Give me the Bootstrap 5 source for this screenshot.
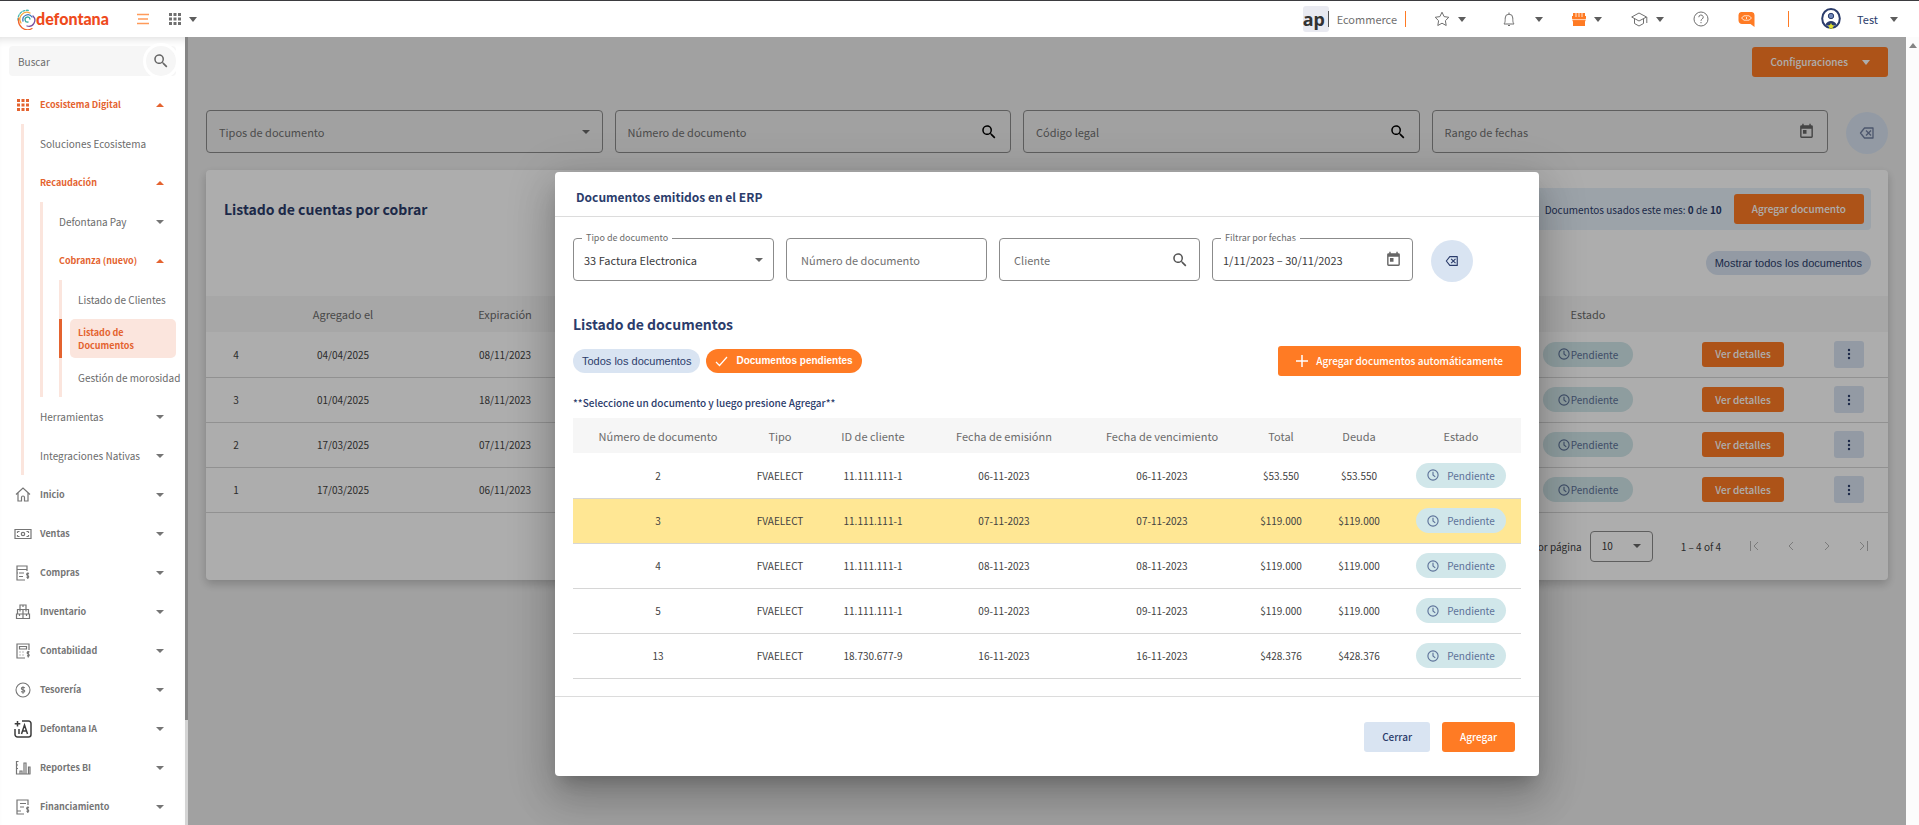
<!DOCTYPE html>
<html lang="es">
<head>
<meta charset="utf-8">
<meta name="viewport" content="width=device-width, initial-scale=1">
<title>Defontana - Listado de documentos</title>
<link href="https://cdn.jsdelivr.net/npm/bootstrap@5.3.0/dist/css/bootstrap.min.css" rel="stylesheet">
<style>
  :root { --brand: #ff7b24; --brand-deep: #e4632f; --navy: #2b3c6b; --mist: #d9e4f2; --teal: #d1e7ea; --ink: #424242; --soft: #6b6b6b; --tint: #fbe5dd; }
  body { font-family: "Noto Sans CJK SC", "Source Sans Pro", sans-serif; font-size: 10px; line-height: 13px; color: var(--ink); }
  svg { display: block; flex: none; }
  .ui-font { font-family: "Liberation Sans", sans-serif; font-size: 11px; line-height: 14px; }
  .caret { width: 0; height: 0; border: 4px solid transparent; border-top: 5px solid #5d5d5d; border-bottom: 0; flex: none; }
  .caret.up { border-top: 0; border-bottom: 4px solid var(--brand-deep); }

  /* top bar */
  .topbar { height: 37px; border-top: 1px solid #3b3b3f; background: #fff; padding: 0 21px 0 17px; z-index: 5; color: #6f6f6f; }
  .brand-word { font: 900 16px/20px Lato, sans-serif; color: #ee4a1c; }
  .rule { width: 1px; height: 16px; background: var(--brand); }
  .tools { gap: 29px; }
  .icon-btn { border: 0; background: none; padding: 0; display: flex; align-items: center; gap: 8px; color: #6f6f6f; }
  .icon-btn.wide { gap: 20px; }
  .icon-btn.user, .shop-name { font-size: 11px; }
  .icon-btn.user { color: var(--navy); margin-left: 32px; }
  .shop { width: 26px; height: 26px; background: #e9eaf1; border-radius: 3px; font: 700 18px/24px "Noto Sans", sans-serif; color: #333; }
  .shop-bar { width: 1px; height: 16px; background: #555; }

  /* side menu */
  .side { width: 185px; background: #fff; box-shadow: inset 0 8px 8px -6px #0002; }
  .side-bar { width: 3px; background: #d4d4d4; }
  .side-thumb { height: 683px; background: #858585; }
  .search-box { margin: 9px 9px 9px; height: 30px; background: #f6f6f6; border-radius: 4px; }
  .search-box input { border: 0; background: none; min-width: 0; padding: 0 9px; color: #555; }
  .search-box input::placeholder { color: #6b6b6b; }
  .search-btn { width: 30px; height: 30px; border: 0; border-radius: 50%; background: #f6f6f6; color: #666; outline: 3px solid #fff; padding: 0; place-items: center; }
  .tree, .tree ul { list-style: none; margin: 0; padding: 0; }
  .tree a { display: flex; align-items: center; height: 39px; padding-right: 21px; color: #6b6b6b; text-decoration: none; }
  .tree > li > a { font-weight: 700; font-size: 9px; padding-left: 14px; color: #757575; }
  .tree > li > a > svg { width: 18px; margin-right: 8px; }
  .tree ul { border-left: 3px solid var(--tint); margin-left: 16px; }
  .tree > li > ul { margin-left: 21px; }
  .tree ul a { padding-left: 16px; }
  .tree .caret { margin-left: auto; border-top-color: #757575; border-top-width: 4px; }
  .tree .caret.up { border-top: 0; }
  .tree a.open { color: var(--brand-deep) !important; font-weight: 700; font-size: 9px; }
  .tree .here { border-left: 3px solid var(--brand-deep); margin-left: -3px; padding-left: 8px; }
  .tree .here a { background: var(--tint); border-radius: 5px; margin-right: 9px; padding: 0 8px; font-weight: 700; font-size: 9px; color: var(--brand-deep); }

  /* page */
  .page { background: #eee; position: relative; padding: 10px 18px 0 18px; overflow: hidden; }
  .page-scroll { width: 13px; background: #fcfcfc; padding-top: 6px; }
  .page-scroll .caret { border-top: 0; border-bottom: 5px solid #858585; margin: 0 auto; }
  .btn { --bs-btn-font-size: 10px; --bs-btn-line-height: 14px; --bs-btn-font-weight: 500; --bs-btn-border-radius: 3px; --bs-btn-border-width: 0; font-family: inherit; height: 30px; --bs-btn-padding-y: 0; --bs-btn-padding-x: 18px; white-space: nowrap; }
  .btn-brand { --bs-btn-color: #fff; --bs-btn-bg: var(--brand); --bs-btn-hover-bg: #f06c15; --bs-btn-hover-color: #fff; }
  .btn-mist { --bs-btn-color: var(--navy); --bs-btn-bg: var(--mist); --bs-btn-hover-bg: #c8d7ea; }
  .caret.light { border-top-color: #fff; margin-left: 14px; }
  .round-btn { width: 42px; height: 42px; border: 0; border-radius: 50%; background: var(--mist); color: var(--navy); padding: 0; display: grid; place-items: center; flex: none; margin: 2px 0 0 6px; }
  .search-row { gap: 12px; margin-top: 33px; }
  .search-row .field { flex: 1 1 0; }
  .field { position: relative; height: 43px; border: 1px solid #8b8b8b; border-radius: 4px; display: flex; align-items: center; padding: 0 12px; min-width: 0; }
  .field input, .field select { flex: 1; min-width: 0; width: 0; border: 0; background: none; padding: 0; appearance: none; font-size: 11px; line-height: 18px; color: #3a3a3a; outline: 0; }
  .field input::placeholder, .field select.blank { color: #707070; opacity: 1; }
  .field .caret { border-top-width: 4px; border-top-color: #666; }
  .field .notch { position: absolute; top: -7px; left: 8px; padding: 0 4px; background: #fff; font-size: 9px; line-height: 12px; color: #6b6b6b; }
  .panel { background: #fff; border-radius: 4px; box-shadow: 0 4px 10px #0003; margin-top: 16px; }
  .panel-head { padding: 18px 17px 0 18px; }
  .panel-tools { padding: 21px 17px; }
  .panel-foot { padding: 18px 19px 18px 18px; }
  .quota { background: #e6f0fa; height: 42px; border-radius: 4px; padding: 0 7px 0 16px; color: var(--navy); }
  .pill-btn { border: 0; border-radius: 12px; height: 24px; padding: 0 9px; background: var(--mist); color: var(--navy); display: flex; align-items: center; }
  .pill-btn.on { background: var(--brand); color: #fff; font-weight: 700; font-size: 10px; }
  .state { display: inline-flex; align-items: center; justify-content: center; width: 90px; height: 25px; border-radius: 13px; background: var(--teal); color: #5d7299; gap: 1px; vertical-align: middle; }
  .grid-table { table-layout: fixed; width: 100%; text-align: center; }
  .grid-table th { font-weight: 400; font-size: 11px; line-height: 18px; background: #f6f6f6; color: #6b6b6b; padding: 0; }
  .grid-table td { height: 45px; border-bottom: 1px solid #d6d6d6; padding: 0; }
  .grid-table .picked { background: #ffe794; }
  .accounts th { height: 36px; }
  .accounts .btn { height: 25px; --bs-btn-padding-x: 13px; }
  .accounts .more { width: 30px; height: 27px; padding: 0; display: inline-grid; place-items: center; vertical-align: middle; }
  .page-size { width: 63px; height: 31px; padding: 0 11px; }
  .page-size select { font-size: 10px; }
  .pager-btn { border: 0; background: none; padding: 0; color: #b5b5b5; }

  /* dialog */
  .dimmer { position: absolute; inset: 0; background: rgba(0,0,0,.32); z-index: 1; }
  .dialog { --bs-modal-width: 984px; --bs-modal-margin: 0; position: absolute; z-index: 2; padding-top: 135px; }
  .dialog .modal-content { border: 0; border-radius: 4px; box-shadow: 0 11px 15px -7px #0003, 0 24px 38px 3px #00000024, 0 9px 46px 8px #0000001f; color: var(--ink); }
  .dialog .modal-header { height: 45px; padding: 6px 21px 0; border-color: #dcdcdc; }
  .dialog .modal-body { padding: 21px 18px 17px; }
  .dialog .modal-footer { padding: 25px 24px 24px; gap: 12px; border-color: #dcdcdc; }
  .filters { display: grid; grid-template-columns: repeat(4, minmax(0, 201px)) 48px; column-gap: 12px; margin-bottom: 32px; }
  .filters .field { padding: 0 10px; }
  .chips { gap: 6px; margin-top: 12px; }
  .head-sm { font-size: 12px; line-height: 18px; font-weight: 700; color: var(--navy); margin: 0; }
  .head-lg { font-size: 14px; line-height: 20px; font-weight: 700; color: var(--navy); margin: 0; }
  .hint { color: var(--navy); font-weight: 500; line-height: 14px; }
  .docs th { height: 35px; }
</style>
</head>
<body class="vh-100 d-flex flex-column overflow-hidden">
<svg class="d-none">
  <symbol id="lens" viewBox="0 0 24 24"><path fill="currentColor" d="M15.5 14h-.8l-.3-.3a6.500 6.500 0 1 0-.7.7l.3.300v.8l5 5 1.500-1.500zm-6 0a4.500 4.500 0 1 1 0-9 4.500 4.500 0 0 1 0 9z"/></symbol>
  <symbol id="cal" viewBox="0 0 24 24"><path fill="currentColor" d="M19 3h-1V1h-2v2H8V1H6v2H5a2 2 0 0 0-2 2v14a2 2 0 0 0 2 2h14a2 2 0 0 0 2-2V5a2 2 0 0 0-2-2zm0 16H5V8h14zM7 10h5v5H7z"/></symbol>
  <symbol id="erase" viewBox="0 0 16 16"><g fill="none" stroke="currentColor" stroke-width="1.300" stroke-linejoin="round"><path d="M5.500 3h8.500v10H5.500L1.500 8z"/><path d="M7 5.500l5 5m0-5l-5 5"/></g></symbol>
  <symbol id="clock" viewBox="0 0 16 16"><g fill="none" stroke="currentColor" stroke-width="1.500"><circle cx="8" cy="8" r="6.800"/><path d="M8 3.500V8l3 2.500"/></g></symbol>
  <symbol id="dots" viewBox="0 0 12 12"><g fill="currentColor"><circle cx="6" cy="2" r="1.200"/><circle cx="6" cy="6" r="1.200"/><circle cx="6" cy="10" r="1.200"/></g></symbol>
  <symbol id="apps" viewBox="0 0 12 12"><path fill="currentColor" d="M0 0h3v3H0zM4.500 0h3v3h-3zM9 0h3v3H9zM0 4.500h3v3H0zM4.500 4.500h3v3h-3zM9 4.500h3v3H9zM0 9h3v3H0zM4.500 9h3v3h-3zM9 9h3v3H9z"/></symbol>
</svg>

<header class="topbar d-flex align-items-center flex-shrink-0">
  <a href="#" class="d-flex align-items-center text-decoration-none">
    <svg width="19" height="21" viewBox="0 0 19 21" fill="none" stroke-width="1.300" stroke-linecap="round"><path d="M1 11A9 9 0 0 1 12 1.500" stroke="#41b8b0" stroke-dasharray="2 1.500"/><path d="M15 19.500A9 9 0 0 1 2 9" stroke="#f0642d"/><path d="M4 14A7 7 0 0 1 13 4" stroke="#f5a63b"/><path d="M10 17a6 6 0 0 0 6-10" stroke="#7a4d9c"/><path d="M6 12a5 5 0 0 1 9-4" stroke="#3d79bd"/><path d="M13 10a2.500 2.500 0 1 0-2 3" stroke="#35a99c"/></svg>
    <span class="brand-word">defontana</span>
  </a>
  <button class="icon-btn ms-4 ps-1 me-3" aria-label="Menú"><svg width="12" height="12" viewBox="0 0 12 12" stroke="#ff9a5a" stroke-width="1.500"><path d="M0 1.500h12M1 6h10M0 10.500h12"/></svg></button>
  <button class="icon-btn ms-1" aria-label="Aplicaciones"><svg width="12" height="12"><use href="#apps"/></svg><span class="caret"></span></button>

  <div class="d-flex align-items-center ms-auto me-4 pe-1">
    <span class="shop d-flex align-items-center justify-content-between me-2"><span>ap</span><i class="shop-bar"></i></span>
    <span class="shop-name me-2">Ecommerce</span>
    <span class="rule"></span>
  </div>
  <div class="tools d-flex align-items-center">
    <button class="icon-btn" aria-label="Favoritos"><svg width="16" height="16" viewBox="0 0 16 16" fill="none" stroke="currentColor"><path d="M8 1.200l2.100 4.400 4.700.7-3.400 3.400.8 4.800L8 12.200l-4.200 2.300.8-4.800L1.200 6.300l4.700-.7z"/></svg><span class="caret"></span></button>
    <button class="icon-btn wide ms-2" aria-label="Notificaciones"><svg width="12" height="15" viewBox="0 0 12 15" fill="none" stroke="currentColor"><path d="M1 12h10c-1-1.500-1.200-2-1.200-6a3.800 3.800 0 0 0-7.600 0c0 4-.2 4.500-1.200 6zM5 13.500h2M6 .500v1.500"/></svg><span class="caret"></span></button>
    <button class="icon-btn" aria-label="Tienda"><svg width="14" height="13" viewBox="0 0 14 13" fill="#ff7b24"><path d="M1 0h12v3.500H1z"/><path d="M0 3h14v2a1.500 1.500 0 0 1-14 0z"/><path d="M1 7h12v6H1z"/><path d="M4 0v4M7 0v4M10 0v4" stroke="#fff" stroke-width=".8"/><path d="M0 6.600h14" stroke="#fff" stroke-width=".7"/></svg><span class="caret"></span></button>
    <button class="icon-btn" aria-label="Academia"><svg width="17" height="15" viewBox="0 0 17 15" fill="none" stroke="currentColor"><path d="M8 1l7.500 4L8 9 .700 5zM3.500 7v4.500L8 14l4.500-2.500V7M15.800 5v6"/></svg><span class="caret"></span></button>
    <button class="icon-btn" aria-label="Ayuda"><svg width="16" height="16" viewBox="0 0 16 16" fill="none" stroke="currentColor"><circle cx="8" cy="8" r="7"/><path d="M5.800 6.200a2.200 2.200 0 1 1 3.300 1.900c-.8.500-1.100.800-1.100 1.700M8 11v1.200"/></svg></button>
    <button class="icon-btn me-1" aria-label="Chat"><svg width="17" height="15" viewBox="0 0 17 15"><path fill="#ff7b24" d="M3 0h11a3 3 0 0 1 2.500 3v12l-4-3H4a4 4 0 0 1-3.500-3.500V3A3 3 0 0 1 3 0z"/><path d="M3.500 6L6 3.800h5L13.500 6 11 8.200H6zM6.500 6h.1M8.500 5v2M10.500 6h.1" fill="none" stroke="#ffe3cf"/></svg></button>
    <span class="rule"></span>
  </div>
  <button class="icon-btn user">
    <svg class="me-2" width="20" height="22" viewBox="0 0 20 22"><ellipse cx="10" cy="10.500" rx="8.800" ry="9.500" fill="#fff" stroke="#2b3c6b" stroke-width="2"/><circle cx="10" cy="8" r="2.700" fill="#6f86b8" stroke="#2b3c6b"/><path d="M4.500 16.500a6 6 0 0 1 11 0 9 9 0 0 1-11 0z" fill="#2b3c6b"/><path fill="#dfe02c" d="M10 15l1 2 2.200.4-1.600 1.600.4 2.300-2-1-2 1 .4-2.300-1.600-1.600L9 17z"/></svg>
    Test<span class="caret ms-1"></span>
  </button>
</header>

<div class="d-flex flex-fill overflow-hidden">
  <aside class="side flex-shrink-0 overflow-hidden">
    <div class="search-box d-flex">
      <input class="flex-fill" type="text" placeholder="Buscar" aria-label="Buscar">
      <button class="search-btn d-grid flex-shrink-0" aria-label="Buscar"><svg width="18" height="18"><use href="#lens"/></svg></button>
    </div>
    <ul class="tree">
      <li><a href="#" class="open"><svg height="12" viewBox="0 0 12 12"><use href="#apps"/></svg>Ecosistema Digital<span class="caret up"></span></a>
        <ul>
          <li><a href="#">Soluciones Ecosistema</a></li>
          <li><a href="#" class="open">Recaudación<span class="caret up"></span></a>
            <ul>
              <li><a href="#">Defontana Pay<span class="caret"></span></a></li>
              <li><a href="#" class="open">Cobranza (nuevo)<span class="caret up"></span></a>
                <ul>
                  <li><a href="#" class="text-nowrap pe-0">Listado de Clientes</a></li>
                  <li class="here"><a href="#">Listado de<br>Documentos</a></li>
                  <li><a href="#" class="text-nowrap pe-0">Gestión de morosidad</a></li>
                </ul>
              </li>
            </ul>
          </li>
          <li><a href="#">Herramientas<span class="caret"></span></a></li>
          <li><a href="#">Integraciones Nativas<span class="caret"></span></a></li>
        </ul>
      </li>
      <li><a href="#"><svg height="15" viewBox="0 0 18 15" fill="none" stroke="currentColor" stroke-width="1.200"><path d="M2 7.500L9 1l7 6.500M4 6v8h3.500v-3.500a1.500 1.500 0 0 1 3 0V14H14V6"/></svg>Inicio<span class="caret"></span></a></li>
      <li><a href="#"><svg height="12" viewBox="0 0 18 12" fill="none" stroke="currentColor" stroke-width="1.200"><path d="M1 1.500h16v9H1zM3.500 3.500h2M3.500 8.500h2M12.500 3.500h2M12.500 8.500h2M3.500 3.500v1.500M14.500 3.500v1.500M3.500 8.500V7M14.500 8.500V7"/><circle cx="9" cy="6" r="1.700"/></svg>Ventas<span class="caret"></span></a></li>
      <li><a href="#"><svg height="16" viewBox="0 0 18 16" fill="none" stroke="currentColor" stroke-width="1.200"><path d="M13 6V1H3v14h8M3 4.500h10M5 8h5M5 11.500h4M3 8h1M15 8.500c-2.500-1-3 1.500-1.500 2s2 2.500-1 1.700M13.800 7.500v6.500"/></svg>Compras<span class="caret"></span></a></li>
      <li><a href="#"><svg height="16" viewBox="0 0 18 16" fill="none" stroke="currentColor" stroke-width="1.200"><path d="M6 1h6v4.500H6zM9 1v2M3.500 5.500h11V10h-11zM9 5.500V10M6 5.500v2M12 5.500v2M2.500 10h13v4.500h-13zM9 10v4.500M5.500 10v2M12.500 10v2"/></svg>Inventario<span class="caret"></span></a></li>
      <li><a href="#"><svg height="16" viewBox="0 0 18 16" fill="none" stroke="currentColor" stroke-width="1.200"><path d="M15 7V1H3v14h8M5.500 3.500h7v2.500h-7z"/><path d="M5.500 9h1M8.500 9h1M5.500 12h1M8.500 12h1M15.500 9c-2.500-1-3 1.500-1.500 2s2 2.500-1 1.700M14.300 8v6.500"/></svg>Contabilidad<span class="caret"></span></a></li>
      <li><a href="#"><svg height="16" viewBox="0 0 18 16" fill="none" stroke="currentColor" stroke-width="1.100"><circle cx="9" cy="8" r="7"/><path d="M10.800 6c-.8-1-3.600-.8-3.400.7.2 1.500 3.400.8 3.400 2.400 0 1.400-2.800 1.400-3.600.3M9 4.200v7.600"/></svg>Tesorería<span class="caret"></span></a></li>
      <li><a href="#"><svg height="18" viewBox="0 0 18 18" fill="none" stroke="#3d3d3d" stroke-width="1.500"><path d="M8 1h6.500a2.500 2.500 0 0 1 2.500 2.500v11a2.500 2.500 0 0 1-2.500 2.500h-11A2.500 2.500 0 0 1 1 14.500V9M3.500 1v5.500M.700 3.700h5.600M5 9v5M7.500 14l3-9 3 9M8.500 11h4"/></svg>Defontana IA<span class="caret"></span></a></li>
      <li><a href="#"><svg height="15" viewBox="0 0 18 15" fill="none" stroke="currentColor" stroke-width="1.200"><path d="M2.500 1v13h14M2.500 1.500h2M2.500 5h1.500M2.500 8.500h1.500M6 14v-3h2v3M10 14V3h2v11M14.500 14V7h1.500v7"/></svg>Reportes BI<span class="caret"></span></a></li>
      <li><a href="#"><svg height="16" viewBox="0 0 18 16" fill="none" stroke="currentColor" stroke-width="1.200"><path d="M14 6V1H3v14h7M3 12h4M6 4.500h6M6 8h4M15 8.500c-2.500-1-3 1.500-1.500 2s2 2.500-1 1.700M13.800 7.500v6.500"/></svg>Financiamiento<span class="caret"></span></a></li>
    </ul>
  </aside>
  <div class="side-bar flex-shrink-0"><div class="side-thumb"></div></div>

  <main class="page flex-fill">
    <div class="d-flex justify-content-end">
      <button class="btn btn-brand d-flex align-items-center">Configuraciones<span class="caret light"></span></button>
    </div>
    <div class="search-row d-flex">
      <div class="field"><select class="blank" aria-label="Tipos de documento"><option>Tipos de documento</option></select><span class="caret"></span></div>
      <div class="field"><input type="text" placeholder="Número de documento" aria-label="Número de documento"><svg width="18" height="18" color="#000"><use href="#lens"/></svg></div>
      <div class="field"><input type="text" placeholder="Código legal" aria-label="Código legal"><svg width="18" height="18" color="#000"><use href="#lens"/></svg></div>
      <div class="field"><input type="text" placeholder="Rango de fechas" aria-label="Rango de fechas"><svg width="17" height="17" color="#666"><use href="#cal"/></svg></div>
      <button class="round-btn" aria-label="Limpiar filtros"><svg width="16" height="16" opacity=".6"><use href="#erase"/></svg></button>
    </div>

    <section class="panel">
      <div class="panel-head d-flex justify-content-between align-items-center">
        <h1 class="head-lg">Listado de cuentas por cobrar</h1>
        <div class="quota d-flex align-items-center gap-2">
          <svg width="16" height="16" viewBox="0 0 16 16" fill="none" stroke="currentColor" stroke-width="1.500"><circle cx="8" cy="8" r="7"/><path d="M8 7v5M8 4v1.500"/></svg>
          <span class="me-1">Documentos usados este mes: <b>0</b> de <b>10</b></span>
          <button class="btn btn-brand">Agregar documento</button>
        </div>
      </div>
      <div class="panel-tools d-flex justify-content-end"><button class="pill-btn ui-font">Mostrar todos los documentos</button></div>
      <table class="grid-table accounts">
        <colgroup><col style="width:60px"><col style="width:154px"><col style="width:170px"><col><col style="width:144px"><col style="width:166px"><col style="width:62px"></colgroup>
        <thead><tr><th></th><th>Agregado el</th><th>Expiración</th><th></th><th>Estado</th><th></th><th></th></tr></thead>
        <tbody>
          <tr><td>4</td><td>04/04/2025</td><td>08/11/2023</td><td></td><td><span class="state"><svg width="12" height="12"><use href="#clock"/></svg>Pendiente</span></td><td><button class="btn btn-brand">Ver detalles</button></td><td class="pe-3"><button class="btn btn-mist more" aria-label="Opciones"><svg width="12" height="12"><use href="#dots"/></svg></button></td></tr>
          <tr><td>3</td><td>01/04/2025</td><td>18/11/2023</td><td></td><td><span class="state"><svg width="12" height="12"><use href="#clock"/></svg>Pendiente</span></td><td><button class="btn btn-brand">Ver detalles</button></td><td class="pe-3"><button class="btn btn-mist more" aria-label="Opciones"><svg width="12" height="12"><use href="#dots"/></svg></button></td></tr>
          <tr><td>2</td><td>17/03/2025</td><td>07/11/2023</td><td></td><td><span class="state"><svg width="12" height="12"><use href="#clock"/></svg>Pendiente</span></td><td><button class="btn btn-brand">Ver detalles</button></td><td class="pe-3"><button class="btn btn-mist more" aria-label="Opciones"><svg width="12" height="12"><use href="#dots"/></svg></button></td></tr>
          <tr><td>1</td><td>17/03/2025</td><td>06/11/2023</td><td></td><td><span class="state"><svg width="12" height="12"><use href="#clock"/></svg>Pendiente</span></td><td><button class="btn btn-brand">Ver detalles</button></td><td class="pe-3"><button class="btn btn-mist more" aria-label="Opciones"><svg width="12" height="12"><use href="#dots"/></svg></button></td></tr>
        </tbody>
      </table>
      <div class="panel-foot d-flex justify-content-end align-items-center">
        <label for="page-size" class="me-2">por página</label>
        <div class="field page-size"><select id="page-size"><option>10</option></select><span class="caret"></span></div>
        <span class="ms-4 ps-1 me-4 pe-1">1 – 4 of 4</span>
        <div class="d-flex gap-4">
          <button class="pager-btn" aria-label="Primera"><svg width="12" height="12" viewBox="0 0 12 12" fill="none" stroke="currentColor"><path d="M1.500 1v10M9 2L5 6l4 4"/></svg></button>
          <button class="pager-btn" aria-label="Anterior"><svg width="12" height="12" viewBox="0 0 12 12" fill="none" stroke="currentColor"><path d="M8 2L4 6l4 4"/></svg></button>
          <button class="pager-btn" aria-label="Siguiente"><svg width="12" height="12" viewBox="0 0 12 12" fill="none" stroke="currentColor"><path d="M4 2l4 4-4 4"/></svg></button>
          <button class="pager-btn" aria-label="Última"><svg width="12" height="12" viewBox="0 0 12 12" fill="none" stroke="currentColor"><path d="M3 2l4 4-4 4M10.500 1v10"/></svg></button>
        </div>
      </div>
    </section>

    <div class="dimmer"></div>
    <div class="modal dialog d-block" role="dialog" aria-labelledby="dialog-title">
      <div class="modal-dialog">
        <div class="modal-content">
          <div class="modal-header"><h2 class="head-sm" id="dialog-title">Documentos emitidos en el ERP</h2></div>
          <div class="modal-body">
            <div class="filters">
              <div class="field"><label class="notch" for="doc-type">Tipo de documento</label><select id="doc-type"><option>33 Factura Electronica</option></select><span class="caret"></span></div>
              <div class="field"><input class="ps-1" type="text" placeholder="Número de documento" aria-label="Número de documento"></div>
              <div class="field"><input class="ps-1" type="text" placeholder="Cliente" aria-label="Cliente"><svg width="18" height="18" color="#555"><use href="#lens"/></svg></div>
              <div class="field"><label class="notch" for="dates">Filtrar por fechas</label><input id="dates" type="text" value="1/11/2023 – 30/11/2023"><svg width="17" height="17" color="#666"><use href="#cal"/></svg></div>
              <button class="round-btn" aria-label="Limpiar filtros"><svg width="14" height="14"><use href="#erase"/></svg></button>
            </div>
            <h3 class="head-lg">Listado de documentos</h3>
            <div class="chips d-flex align-items-center">
              <button class="pill-btn ui-font">Todos los documentos</button>
              <button class="pill-btn on ui-font"><svg class="me-2" width="13" height="12" viewBox="0 0 13 12" fill="none" stroke="#fff" stroke-width="1.200"><path d="M1 7l3.500 3.500L12 2"/></svg>Documentos pendientes</button>
              <button class="btn btn-brand ms-auto d-flex align-items-center"><svg class="me-2" width="12" height="12" viewBox="0 0 12 12" stroke="#fff" stroke-width="1.500"><path d="M6 0v12M0 6h12"/></svg>Agregar documentos automáticamente</button>
            </div>
            <p class="hint mt-3 mb-2 pt-1">**Seleccione un documento y luego presione Agregar**</p>
            <table class="grid-table docs">
              <colgroup><col style="width:170px"><col style="width:74px"><col style="width:112px"><col style="width:150px"><col style="width:166px"><col style="width:72px"><col style="width:84px"><col style="width:120px"></colgroup>
              <thead><tr><th>Número de documento</th><th>Tipo</th><th>ID de cliente</th><th>Fecha de emisiónn</th><th>Fecha de vencimiento</th><th>Total</th><th>Deuda</th><th>Estado</th></tr></thead>
              <tbody>
                <tr><td>2</td><td>FVAELECT</td><td>11.111.111-1</td><td>06-11-2023</td><td>06-11-2023</td><td>$53.550</td><td>$53.550</td><td><span class="state gap-2"><svg width="12" height="12"><use href="#clock"/></svg>Pendiente</span></td></tr>
                <tr class="picked"><td>3</td><td>FVAELECT</td><td>11.111.111-1</td><td>07-11-2023</td><td>07-11-2023</td><td>$119.000</td><td>$119.000</td><td><span class="state gap-2"><svg width="12" height="12"><use href="#clock"/></svg>Pendiente</span></td></tr>
                <tr><td>4</td><td>FVAELECT</td><td>11.111.111-1</td><td>08-11-2023</td><td>08-11-2023</td><td>$119.000</td><td>$119.000</td><td><span class="state gap-2"><svg width="12" height="12"><use href="#clock"/></svg>Pendiente</span></td></tr>
                <tr><td>5</td><td>FVAELECT</td><td>11.111.111-1</td><td>09-11-2023</td><td>09-11-2023</td><td>$119.000</td><td>$119.000</td><td><span class="state gap-2"><svg width="12" height="12"><use href="#clock"/></svg>Pendiente</span></td></tr>
                <tr><td>13</td><td>FVAELECT</td><td>18.730.677-9</td><td>16-11-2023</td><td>16-11-2023</td><td>$428.376</td><td>$428.376</td><td><span class="state gap-2"><svg width="12" height="12"><use href="#clock"/></svg>Pendiente</span></td></tr>
              </tbody>
            </table>
          </div>
          <div class="modal-footer">
            <button class="btn btn-mist m-0">Cerrar</button>
            <button class="btn btn-brand m-0">Agregar</button>
          </div>
        </div>
      </div>
    </div>
  </main>
  <div class="page-scroll flex-shrink-0"><div class="caret"></div></div>
</div>
<script src="https://cdn.jsdelivr.net/npm/bootstrap@5.3.0/dist/js/bootstrap.bundle.min.js"></script>
</body>
</html>
